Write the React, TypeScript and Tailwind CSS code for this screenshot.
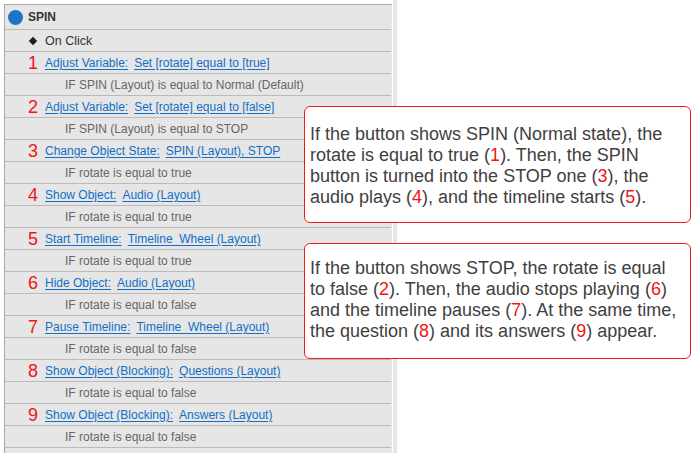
const rows = [
  { n: "1", action: "Adjust Variable:", target: "Set [rotate] equal to [true]", cond: "IF SPIN (Layout) is equal to Normal (Default)" },
  { n: "2", action: "Adjust Variable:", target: "Set [rotate] equal to [false]", cond: "IF SPIN (Layout) is equal to STOP" },
  { n: "3", action: "Change Object State:", target: "SPIN (Layout), STOP", cond: "IF rotate is equal to true" },
  { n: "4", action: "Show Object:", target: "Audio (Layout)", cond: "IF rotate is equal to true" },
  { n: "5", action: "Start Timeline:", target: "Timeline_Wheel (Layout)", cond: "IF rotate is equal to true" },
  { n: "6", action: "Hide Object:", target: "Audio (Layout)", cond: "IF rotate is equal to false" },
  { n: "7", action: "Pause Timeline:", target: "Timeline_Wheel (Layout)", cond: "IF rotate is equal to false" },
  { n: "8", action: "Show Object (Blocking):", target: "Questions (Layout)", cond: "IF rotate is equal to false" },
  { n: "9", action: "Show Object (Blocking):", target: "Answers (Layout)", cond: "IF rotate is equal to false" },
];

const Num = ({ children }: { children: string }) => (
  <span className="text-[#f01414]">{children}</span>
);

export default function App() {
  return (
    <div className="relative w-[698px] h-[459px] bg-white font-['Liberation_Sans',Arial,sans-serif]">
      <div className="flex items-start">
        <div className="pt-[4px] pl-[4px]">
          <div className="w-[388px] h-[449px] border-t border-l border-[#a8a8a8] bg-[#e6e6e6]">
            <div className="flex items-center h-[25px] mr-[1px] pl-[3px] border-b border-[#bababa]">
              <span className="w-[15px] h-[15px] rounded-full bg-[#1b74c5]" />
              <span className="ml-[5px] text-[12px] font-bold text-[#333]">SPIN</span>
            </div>
            <div className="flex items-center h-[22px] mr-[1px] pt-px border-b border-[#bababa] text-[12.5px] text-[#333]">
              <span className="ml-[25px] w-[6px] h-[6px] rotate-45 bg-[#222]" />
              <span className="ml-[9px]">On Click</span>
            </div>
            {rows.map((r) => (
              <div key={r.n}>
                <div className="flex items-center h-[22px] mr-[1px] border-b border-[#bababa]">
                  <span className="w-[35px] pr-[2px] text-right text-[18px] leading-none text-[#f01414]">
                    {r.n}
                  </span>
                  <span className="ml-[5px] text-[12px] text-[#1170c4] underline underline-offset-2">{r.action}</span>
                  <span className="ml-[6px] text-[12px] text-[#1170c4] underline underline-offset-2">{r.target}</span>
                </div>
                <div className="flex items-center h-[22px] mr-[1px] pt-px border-b border-[#bababa] pl-[60px] text-[12px] text-[#666]">
                  {r.cond}
                </div>
              </div>
            ))}
          </div>
        </div>
        <div className="ml-px w-[4px] h-[453px] bg-[#e6e6e6]" />
      </div>

      <div className="absolute left-[304px] top-[106px] w-[387px] h-[117px] rounded-[6px] border border-[#ee1c1c] bg-white pl-[5px] pt-[17px] text-[18px] leading-[21px] text-[#404040]">
        If the button shows SPIN (Normal state), the
        <br />
        rotate is equal to true (<Num>1</Num>). Then, the SPIN
        <br />
        button is turned into the STOP one (<Num>3</Num>), the
        <br />
        audio plays (<Num>4</Num>), and the timeline starts (<Num>5</Num>).
      </div>

      <div className="absolute left-[304px] top-[243px] w-[387px] h-[116px] rounded-[6px] border border-[#ee1c1c] bg-white pl-[5px] pt-[14px] text-[18px] leading-[21px] text-[#404040]">
        If the button shows STOP, the rotate is equal
        <br />
        to false (<Num>2</Num>). Then, the audio stops playing (<Num>6</Num>)
        <br />
        and the timeline pauses (<Num>7</Num>). At the same time,
        <br />
        the question (<Num>8</Num>) and its answers (<Num>9</Num>) appear.
      </div>
    </div>
  );
}
